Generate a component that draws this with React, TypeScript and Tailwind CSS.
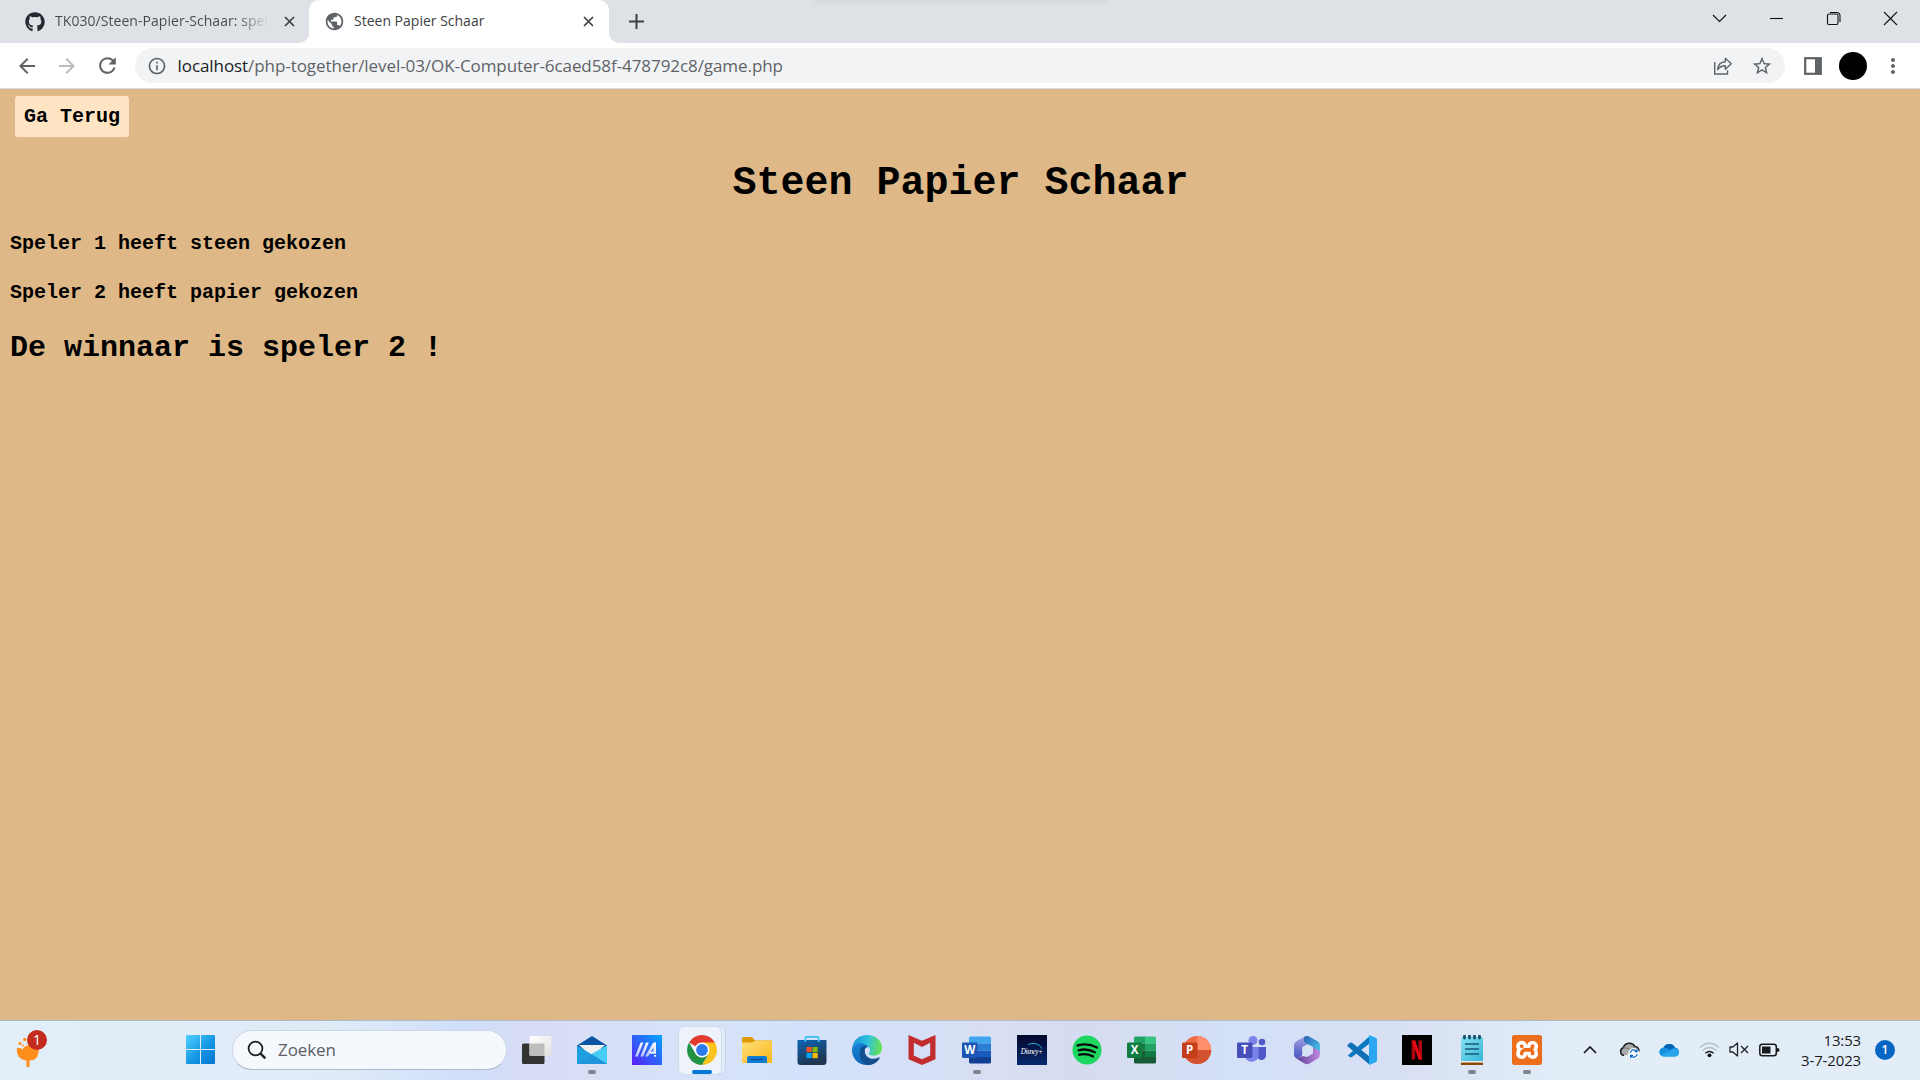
import type { ReactNode } from "react";
import { MdArrowBack, MdArrowForward, MdRefresh, MdPublic, MdInfoOutline, MdStarBorder, MdMoreVert } from "react-icons/md";
import { FaGithub } from "react-icons/fa";
import { SiXampp } from "react-icons/si";

const UI = "font-['Open_Sans',sans-serif]";

function Cross({ size }: { size: number }) {
  return (
    <svg width={size} height={size} viewBox="0 0 11 11" className="shrink-0">
      <path d="M1 1l9 9M10 1l-9 9" stroke="#3c4043" strokeWidth="1.7" />
    </svg>
  );
}

function TabStrip() {
  return (
    <div className="flex h-[43px] shrink-0 items-center bg-[#dee1e6] bg-[linear-gradient(to_bottom,#d7dadf,#dee1e6)] bg-[length:294px_6px] bg-[position:814px_0] bg-no-repeat pl-[25px]">
      <FaGithub size={20} color="#24292f" className="shrink-0" />
      <div className={`${UI} mb-[2px] ml-[10px] w-[214px] overflow-hidden whitespace-nowrap bg-[linear-gradient(to_right,#45494d_85%,#dee1e6_100%)] bg-clip-text text-[14px] leading-5 tracking-[0.05px] text-transparent`}>
        TK030/Steen-Papier-Schaar: spel
      </div>
      <div className="ml-[9px] flex w-[22px] justify-center"><Cross size={11} /></div>
      <div className="relative ml-[9px] flex h-full w-[300px] shrink-0 items-center rounded-t-[10px] bg-white pl-[15px]">
        <svg className="absolute bottom-0 -left-[10px]" width="10" height="10"><path d="M10 0v10H0A10 10 0 0 0 10 0" fill="#fff" /></svg>
        <svg className="absolute bottom-0 -right-[10px]" width="10" height="10"><path d="M0 0v10H10A10 10 0 0 1 0 0" fill="#fff" /></svg>
        <MdPublic size={21} color="#5f6368" className="mb-px shrink-0" />
        <div className={`${UI} mb-[2px] ml-[9px] w-[229px] whitespace-nowrap text-[14px] leading-5 text-[#3c4043]`}>Steen Papier Schaar</div>
        <Cross size={11} />
      </div>
      <svg className="ml-5" width="15" height="15" viewBox="0 0 15 15"><path d="M7.5 0v15M0 7.5h15" stroke="#3c4043" strokeWidth="2" /></svg>
      <div className="ml-auto mb-[6px] flex pr-px">
        {[
          <path d="M1 4l6.500 6.500L14 4" />,
          <path d="M1 7.500h13" />,
          <g><rect x="1.500" y="3" width="10.500" height="10.500" rx="1.500" /><path d="M4 1.500h7a3 3 0 0 1 3 3V11" /></g>,
          <path d="M1 1l13 13M14 1L1 14" />,
        ].map((d, i) => (
          <div key={i} className="flex w-[57px] justify-center">
            <svg width="15" height="15" viewBox="0 0 15 15" fill="none" stroke="#111" strokeWidth="1.1">{d}</svg>
          </div>
        ))}
      </div>
    </div>
  );
}

function Toolbar() {
  return (
    <div className="flex h-[46px] shrink-0 items-start border-b border-[#d5dce2] bg-white pt-[5px] pl-[7px]">
      <div className="flex h-[35px] items-center">
        <div className="flex w-10 justify-center"><MdArrowBack size={24} color="#5f6368" /></div>
        <div className="flex w-10 justify-center"><MdArrowForward size={24} color="#babcbe" /></div>
        <div className="flex w-10 justify-center"><MdRefresh size={25} color="#5f6368" /></div>
      </div>
      <div className="ml-[8px] flex h-[35px] w-[1650px] items-center rounded-full bg-[#f1f3f4] pl-[12px]">
        <MdInfoOutline size={20} color="#5f6368" />
        <div className={`${UI} ml-[10.5px] whitespace-nowrap text-[17px] leading-6 tracking-[-0.07px] text-[#5f6368]`}>
          <span className="text-[#202124]">localhost</span>/php-together/level-03/OK-Computer-6caed58f-478792c8/game.php
        </div>
        <svg className="ml-auto" width="20" height="20" viewBox="0 0 20 20" fill="none" stroke="#5f6368" strokeWidth="1.4">
          <path d="M1.700 6v12h12.800v-3.500" />
          <path d="M12.300 2.300v3.400C7.500 6 5 9 4.600 13.500c2-2.700 4.400-3.800 7.700-3.800v3.600l6-5.500z" strokeLinejoin="round" />
        </svg>
        <MdStarBorder size={22} color="#5f6368" className="mr-[12px] ml-[18px]" />
      </div>
      <div className="flex h-[35px] items-center">
        <svg className="ml-[19px]" width="18" height="18"><rect x="1.200" y="1.200" width="15.600" height="15.600" fill="none" stroke="#5f6368" strokeWidth="2.200" /><path d="M11 1h6v16h-6z" fill="#5f6368" /></svg>
        <div className="ml-[17px] h-7 w-7 rounded-full bg-black" />
        <MdMoreVert size={24} color="#5f6368" className="ml-[13.5px]" />
      </div>
    </div>
  );
}

function Page() {
  return (
    <main className="flex-1 bg-[#deb887] px-[10px] font-['Courier_New','Liberation_Mono',monospace] font-bold text-black">
      <div className="pt-[7px] pl-[5px]">
        <div className="flex h-[41px] w-[114px] items-center justify-center rounded-[3px] bg-[#ffe4c4] text-[20px] leading-none">Ga Terug</div>
      </div>
      <h1 className="mt-[24px] pl-px text-center text-[40px] leading-[45px]">Steen Papier Schaar</h1>
      <p className="mt-[26px] text-[20px] leading-[23px]">Speler 1 heeft steen gekozen</p>
      <p className="mt-[26px] text-[20px] leading-[23px]">Speler 2 heeft papier gekozen</p>
      <h2 className="mt-[27px] text-[30px] leading-[34px]">De winnaar is speler 2 !</h2>
    </main>
  );
}

function Office({ letter, box, children }: { letter: string; box: string; children: ReactNode }) {
  return (
    <svg width="30" height="30" viewBox="0 0 30 30">
      {children}
      <rect x="0" y="7.500" width="15.500" height="15.500" rx="1.200" fill={box} />
      <text x="7.700" y="19.300" textAnchor="middle" fontSize="11.500" fontWeight="700" fill="#fff" fontFamily="Open Sans">{letter}</text>
    </svg>
  );
}

const S = ({ children }: { children: ReactNode }) => (
  <svg width="30" height="30" viewBox="0 0 30 30">{children}</svg>
);

const apps: { icon: ReactNode; open?: boolean; active?: boolean }[] = [
  {
    icon: (
      <S>
        <defs><linearGradient id="tv" x2="1" y2="1"><stop stopColor="#fff" /><stop offset="1" stopColor="#e0e0e0" /></linearGradient></defs>
        <rect x="0" y="8.500" width="22.500" height="20.500" rx="1.500" fill="#333431" />
        <rect x="7.500" y="1" width="22" height="20" rx="1.500" fill="url(#tv)" />
        <path d="M7.500 8.500h15V21h-13.500a1.500 1.500 0 0 1-1.500-1.500z" fill="#bdbebe" />
      </S>
    ),
  },
  {
    open: true,
    icon: (
      <S>
        <path d="M0 10.500L15 1l15 9.500V15H0z" fill="#0b56a4" />
        <path d="M2 10h26l-13 12z" fill="#f1f1f1" />
        <path d="M0 10.500l15 9L30 10.500V29H0z" fill="#1e9fe0" />
        <path d="M30 10.500V29L14.500 19z" fill="#45cdf6" />
        <path d="M0 29l14.500-9.500L30 29z" fill="#1f95dc" />
      </S>
    ),
  },
  {
    icon: (
      <S>
        <defs>
          <linearGradient id="ma" x1="0" y1="1" x2="1" y2="0"><stop stopColor="#5a1df5" /><stop offset=".5" stopColor="#2e62fb" /><stop offset="1" stopColor="#00a8ff" /></linearGradient>
          <linearGradient id="mb" x1="1" y1="0" x2="0" y2="1"><stop stopColor="#fff" /><stop offset="1" stopColor="#a9bdff" /></linearGradient>
        </defs>
        <path d="M0 0h30v30H0z" fill="url(#ma)" />
        <path d="M3 21.500L8.600 7.500h2.800L5.800 21.500z" fill="url(#mb)" />
        <path d="M8.300 21.500L14 7.500h2.800l-5.600 14z" fill="url(#mb)" />
        <path d="M13 21.500L21.300 7.500H24V17h-2.600v-4.500L16 21.500z" fill="url(#mb)" />
        <path d="M18.500 16.500H24v2.200h-6.800zM22 20h2v1.700h-2z" fill="#e8eeff" />
      </S>
    ),
  },
  {
    active: true,
    icon: (
      <S>
        <path d="M15 15L2.010 7.500A15 15 0 0 1 27.990 7.500z" fill="#e33b2e" />
        <path d="M15 15V7.500h12.990A15 15 0 0 1 15 30l6.500-11.200z" fill="#fcc31e" />
        <path d="M2.010 7.500L8.500 18.700 15 22.500l6.500-3.700L15 30A15 15 0 0 1 2.010 7.500z" fill="#229342" />
        <circle cx="15" cy="15" r="7.500" fill="#fff" />
        <circle cx="15" cy="15" r="5.900" fill="#2d7bed" />
      </S>
    ),
  },
  {
    icon: (
      <S>
        <defs><linearGradient id="fo" x2="1" y2="1"><stop stopColor="#ffe07a" /><stop offset="1" stopColor="#fbb61c" /></linearGradient></defs>
        <path d="M0 3.500Q0 2 1.500 2h8.500l3 3.500h15.500Q30 5.500 30 7v8H0z" fill="#dd9a05" />
        <path d="M0 7.500h10.500l3-2H30V28H0z" fill="url(#fo)" />
        <path d="M5 28v-5q0-2 2-2h16q2 0 2 2v5z" fill="#107bd2" />
        <path d="M8.500 24.500h13" stroke="#0a4b93" strokeWidth="1.200" />
      </S>
    ),
  },
  {
    icon: (
      <S>
        <defs><linearGradient id="st" x2=".4" y2="1"><stop stopColor="#0e66b4" /><stop offset="1" stopColor="#213450" /></linearGradient></defs>
        <path d="M.5 5h29v22q0 3-3 3h-23q-3 0-3-3z" fill="url(#st)" />
        <path d="M8.300 7V3.200q0-1.400 1.400-1.400h10.600q1.400 0 1.400 1.400V7" fill="none" stroke="#36bdf3" strokeWidth="1.700" />
        <path d="M9.500 12h5.200v5.200H9.500z" fill="#f25022" /><path d="M15.500 12h5.200v5.200h-5.200z" fill="#7fba00" />
        <path d="M9.500 18h5.200v5.200H9.500z" fill="#00a4ef" /><path d="M15.500 18h5.200v5.200h-5.200z" fill="#ffb900" />
      </S>
    ),
  },
  {
    icon: (
      <S>
        <defs>
          <linearGradient id="e1" x1="0" y1=".4" x2="1" y2=".5"><stop stopColor="#1c8fd6" /><stop offset=".5" stopColor="#2fc3df" /><stop offset="1" stopColor="#6be04e" /></linearGradient>
          <linearGradient id="e2" x1="0" y1="0" x2=".8" y2="1"><stop stopColor="#1586dc" /><stop offset="1" stopColor="#0c59a4" /></linearGradient>
        </defs>
        <path d="M0 14C1 5 7 0 15 0c9 0 15 6 15 13 0 5-4 7.700-8 7.700-3.500 0-5.700-1.200-5.200-2.400 2-2 2-7.300-3.800-7.300C6 8 2 9 0 14z" fill="url(#e1)" />
        <path d="M0 14c2-5.500 9-7.500 14-4 1.500 1 2.500 2 2.700 2.500C12 11 10 17 12.500 21c2.600 4.300 9 6 15 2.200C25 27.500 20.500 30 15 30 6 30-.5 23 0 14z" fill="url(#e2)" />
        <path d="M8.500 14C6 21 9.500 28.500 17 30c5-.6 8.500-3 10.500-6.800.4-.8-.2-1-.8-.7-6 3-12 .5-13.700-4.500-.8-3 .3-5.500 2.300-6.700-3-.8-5.800.2-6.800 2.700z" fill="#124f8e" />
      </S>
    ),
  },
  {
    icon: (
      <S>
        <path d="M1.500 0L15 5.800 28.500 0v24.300L15 30 1.500 24.300z" fill="#c22e2f" />
        <path d="M6.800 7.700L15 12l8.200-4.300v12.800L15 24.200l-8.200-3.700z" fill="#d6dff5" />
      </S>
    ),
  },
  {
    open: true,
    icon: (
      <Office letter="W" box="#1b56b4">
        <path d="M7 3q0-1.500 1.500-1.500h19Q29 1.500 29 3v5.500H7z" fill="#41a5ee" /><path d="M7 8.500h22v7H7z" fill="#2b7cd3" /><path d="M7 15.500h22V22H7z" fill="#185abd" /><path d="M7 22h22v5q0 1.500-1.500 1.500h-19Q7 28.500 7 27z" fill="#103f91" />
      </Office>
    ),
  },
  {
    icon: (
      <S>
        <defs><linearGradient id="di" x2="0" y2="1"><stop stopColor="#04072b" /><stop offset="1" stopColor="#062b6e" /></linearGradient></defs>
        <path d="M0 0h30v30H0z" fill="url(#di)" />
        <path d="M11 9.500c5-2 12-.8 13.700 4" fill="none" stroke="#2fb5d5" strokeWidth="1" />
        <text x="14.800" y="19" textAnchor="middle" fontSize="7.200" fontStyle="italic" fill="#fff" fontFamily="Liberation Serif" textLength="22">Disney+</text>
      </S>
    ),
  },
  {
    icon: (
      <S>
        <circle cx="15" cy="15" r="14.500" fill="#1ed760" />
        <path d="M5.500 10.500q10-3 19.500 2M6.500 15.300q8.500-2.300 16.300 1.900M7.300 19.700q7.200-1.800 13.700 1.700" fill="none" stroke="#0a0a0a" strokeWidth="2.400" strokeLinecap="round" />
      </S>
    ),
  },
  {
    icon: (
      <Office letter="X" box="#107c41">
        <path d="M7 3q0-1.500 1.500-1.500H18v7H7z" fill="#21a366" /><path d="M18 1.500h9.500Q29 1.500 29 3v5.500H18z" fill="#33c481" /><path d="M7 8.500h11v7H7z" fill="#107c41" /><path d="M18 8.500h11v7H18z" fill="#21a366" /><path d="M7 15.500h11V22H7z" fill="#185c37" /><path d="M18 15.500h11V22H18z" fill="#107c41" /><path d="M7 22h22v5q0 1.500-1.500 1.500h-19Q7 28.500 7 27z" fill="#185c37" />
      </Office>
    ),
  },
  {
    icon: (
      <Office letter="P" box="#c43e1c">
        <circle cx="15.200" cy="15" r="14" fill="#ed6c47" /><path d="M15.200 1a14 14 0 0 1 14 14h-14z" fill="#ff8f6b" /><path d="M1.200 15h28a14 14 0 0 1-28 0z" fill="#d35230" />
      </Office>
    ),
  },
  {
    icon: (
      <Office letter="T" box="#464eb8">
        <circle cx="25" cy="7" r="3.300" fill="#5059c9" /><path d="M20 12h9v8a4.500 4.500 0 0 1-9 1z" fill="#5059c9" /><circle cx="16" cy="5.500" r="4.500" fill="#7b83eb" /><path d="M9 12h12.500v9A7 7 0 0 1 9 24z" fill="#7b83eb" />
      </Office>
    ),
  },
  {
    icon: (
      <S>
        <defs>
          <linearGradient id="m1" x2="0" y2="1"><stop stopColor="#a5a2e8" /><stop offset="1" stopColor="#4a56bd" /></linearGradient>
          <linearGradient id="m2" x2="1" y2="1"><stop stopColor="#2a5fae" /><stop offset="1" stopColor="#4fd5f8" /></linearGradient>
          <linearGradient id="m3" x2="1"><stop stopColor="#5a3d94" /><stop offset="1" stopColor="#c08ae0" /></linearGradient>
        </defs>
        <path d="M12.500 1.500L4 6.500Q2 8 2 10.500v9q0 3 2.500 3.500 6 0 6-6v-5L16 9z" fill="url(#m1)" />
        <path d="M12.500 1.500Q15 .3 17.500 1.700L26 6.500Q28 8 28 10.500v9L21 16v-4l-6.500-3.500q-4-2.500-2-7z" fill="url(#m2)" />
        <path d="M28 19.500q0 2.700-2 4l-8 4.800q-3 1.700-6 0L3.500 23q4 .7 7-2l4.500 1 6-3.500V13l5 1.500q2 1.500 2 5z" fill="url(#m3)" />
        <path d="M15 9.700l4.600 2.600v5.400L15 20.300l-4.600-2.600v-5.400z" fill="#d8e2f5" />
      </S>
    ),
  },
  {
    icon: (
      <S>
        <path d="M2 19.500L22.500 1.200v7.200L5 22q-1.200.8-2.300 0L.8 20.400z" fill="#0a79c4" />
        <path d="M.7 9.800L3 7.800q1-.6 2 0L22.500 21.500v8L.8 11.500q-.8-1-.1-1.700z" fill="#0e70b5" />
        <path d="M22 0l6.800 2.800Q30 3.400 30 4.700v20.600q0 1.300-1.200 1.900L22 30z" fill="#2aa6f2" />
      </S>
    ),
  },
  {
    icon: (
      <S>
        <path d="M0 0h30v30H0z" fill="#000" />
        <path d="M9.700 5.500h3.500v18.700l-3.500.5zM16.500 5.500H20v19.200l-3.500-.5z" fill="#b0060f" />
        <path d="M9.700 5.500h3.500L20 24.700l-3.500-.5z" fill="#e50914" />
      </S>
    ),
  },
  {
    open: true,
    icon: (
      <S>
        <defs><linearGradient id="np" x2="1" y2="1"><stop stopColor="#8ae0ee" /><stop offset="1" stopColor="#35b7d8" /></linearGradient></defs>
        <path d="M4 25h22v5H4z" fill="#8d4a06" /><path d="M4 25h22v2.500H4z" fill="#f5f1ea" />
        <path d="M4 3.500Q4 2 5.500 2h19Q26 2 26 3.500V26H4z" fill="url(#np)" />
        <path d="M7.500 1v2M12.500 1v2M17.500 1v2M22.500 1v2" stroke="#10506c" strokeWidth="2.800" strokeLinecap="round" />
        <path d="M8 9h14M8 14h14M8 19h14" stroke="#135a79" strokeWidth="1.700" />
      </S>
    ),
  },
  {
    open: true,
    icon: (
      <div className="flex h-[30px] w-[30px] items-center justify-center rounded-[3px] bg-[radial-gradient(#fff_58%,#c85a15_62%)]">
        <SiXampp size={30} color="#ed6f1d" />
      </div>
    ),
  },
];

function Tray() {
  return (
    <div className={`${UI} ml-auto flex items-center`}>
      <svg width="14" height="9" viewBox="0 0 14 9"><path d="M1 8l6-6 6 6" fill="none" stroke="#1b1b1b" strokeWidth="1.700" /></svg>
      <svg className="ml-[22px]" width="22" height="18" viewBox="0 0 22 18">
        <path d="M5 14.500a4 4 0 0 1-.8-7.700A6.500 6.500 0 0 1 16 5.500a4 4 0 0 1 3.800 5" fill="#aaa" stroke="#1c1c1c" strokeWidth="1.500" />
        <path d="M4 7q4-1 8 2l5-3.500" fill="none" stroke="#777" />
        <circle cx="14.800" cy="12.500" r="5.500" fill="#fff" />
        <path d="M11.300 11.800a3.700 3.700 0 0 1 6.500-1.600M18.300 13.200a3.700 3.700 0 0 1-6.500 1.600M18 8.200v2.500h-2.500M11.600 16.800v-2.500h2.500" fill="none" stroke="#0b6bcb" strokeWidth="1.300" />
      </svg>
      <svg className="ml-[18px]" width="21" height="14" viewBox="0 0 21 14">
        <path d="M5 13.500a4.500 4.500 0 0 1-.5-9A6.500 6.500 0 0 1 16 4.500a4.600 4.600 0 0 1 .5 9z" fill="#1490df" />
        <path d="M4.500 4.500A6.500 6.500 0 0 1 16 4.500q-3 0-5 2.500-3-3-6.500-2.500z" fill="#0364b8" />
        <path d="M2 12.500L12.500 7q4-2.500 7 1 1.500 5-3 5.500H5q-2 0-3-1z" fill="#28a8ea" />
      </svg>
      <svg className="ml-[19px]" width="21" height="16" viewBox="0 0 21 16" fill="none" strokeWidth="1.400">
        <path d="M1 5.500q9.500-8.500 19 0M3.700 8.500q6.800-6 13.600 0" stroke="#b5bdc5" />
        <path d="M6.300 11.300q4.200-3.800 8.400 0" stroke="#222" /><circle cx="10.500" cy="13.300" r="1.900" fill="#111" />
      </svg>
      <svg className="ml-[9px]" width="20" height="15" viewBox="0 0 20 15" fill="none" stroke="#222" strokeWidth="1.300">
        <path d="M1 5h2.800L8.500 1v13L3.800 10H1z" strokeLinejoin="round" /><path d="M12 4l7 7M19 4l-7 7" />
      </svg>
      <svg className="ml-[10px]" width="21" height="14" viewBox="0 0 21 14">
        <rect x=".8" y="1.300" width="16.500" height="11.400" rx="2.500" fill="none" stroke="#1b1b1b" strokeWidth="1.500" /><path d="M3 3.500h8.500v7H3zM18 5q2.500 0 2.500 2T18 9z" fill="#1b1b1b" />
      </svg>
      <div className="ml-[11px] w-[70px] whitespace-nowrap text-right text-[15px] leading-5 tracking-[-0.15px] text-[#1b1b1b]">
        <div>13:53</div>
        <div>3-7-2023</div>
      </div>
      <div className="mr-[25px] ml-[14px] flex h-5 w-5 items-center justify-center rounded-full bg-[#0666c4] text-[12px] font-semibold text-white">1</div>
    </div>
  );
}

function Taskbar() {
  return (
    <footer className="flex h-[60px] shrink-0 items-center border-t border-[#a9bad3] bg-[linear-gradient(to_right,#e2eef8_0,#e1ebf8_330px,#d0dffa_460px,#d6dcf5_520px,#d8e2f8_700px,#d3e2fa_800px,#d8def3_1000px,#d6dcef_1080px,#d3e0f7_1240px,#d8e0f3_1400px,#e2edf8_1570px,#e2edf8_1920px)] pb-[2px]">
      <div className="relative ml-[15px] h-[38px] w-8">
        <svg width="32" height="38" viewBox="0 0 32 38">
          <path d="M2 17q3-1 5.500 1.500 3-5 8-4h8q2 14.500-9 15V36h-3v-6.500Q1 28 2 17z" fill="#ff8f1c" />
          <circle cx="5" cy="12.500" r="1.600" fill="#ff8f1c" /><circle cx="9.800" cy="8.500" r="1.700" fill="#ff8f1c" /><circle cx="8" cy="14.500" r="1" fill="#ff8f1c" />
        </svg>
        <div className={`${UI} absolute -top-px right-0 flex h-5 w-5 items-center justify-center rounded-full bg-[#c42b1c] text-[14px] leading-none text-white`}>1</div>
      </div>
      <svg className="ml-[139px]" width="29" height="29" viewBox="0 0 29 29">
        <defs><linearGradient id="wn" x2="1" y2="1"><stop stopColor="#4fd3ff" /><stop offset=".55" stopColor="#1596e4" /><stop offset="1" stopColor="#0473d0" /></linearGradient></defs>
        <path d="M1 0h13v14H0V1q0-1 1-1zM15 0h13q1 0 1 1v13H15zM0 15h14v14H1q-1 0-1-1zM15 15h14v13q0 1-1 1H15z" fill="url(#wn)" />
      </svg>
      <div className="ml-[17px] flex h-[40px] w-[275px] items-center rounded-full border border-[#cdd8e6] border-b-[#adb9c9] bg-[#f5f8fd] pl-[14px]">
        <svg width="20" height="20" viewBox="0 0 20 20" fill="none" stroke="#222"><circle cx="8.500" cy="8.500" r="6.900" strokeWidth="1.800" /><path d="M13.300 13.300l5 5" strokeWidth="2.500" /></svg>
        <span className={`${UI} ml-[11px] text-[17px] leading-6 tracking-[-0.1px] text-[#5d6064]`}>Zoeken</span>
      </div>
      <div className="ml-[15px] flex h-full gap-[25px]">
        {apps.map((a, i) => (
          <div key={i} className="relative flex h-full w-[30px] items-center justify-center">
            {a.active && (
              <>
                <div className="absolute top-[5px] -left-[5px] h-[49px] w-[44px] rounded-[6px] border border-[#c6d3ea] bg-[#e3eaf8]" />
                <div className="absolute top-[5px] -left-[9px] h-[49px] w-[44px] rounded-[6px] border border-[#d2dcef] bg-[#edf2fb]" />
              </>
            )}
            <div className="relative">{a.icon}</div>
            {a.active && <div className="absolute top-[49px] h-1 w-5 rounded-full bg-[#0078d4]" />}
            {a.open && <div className="absolute top-[49px] h-1 w-2 rounded-full bg-[#7e838c]" />}
          </div>
        ))}
      </div>
      <Tray />
    </footer>
  );
}

export default function App() {
  return (
    <div className="flex h-[1080px] w-[1920px] flex-col overflow-hidden">
      <TabStrip />
      <Toolbar />
      <Page />
      <Taskbar />
    </div>
  );
}
